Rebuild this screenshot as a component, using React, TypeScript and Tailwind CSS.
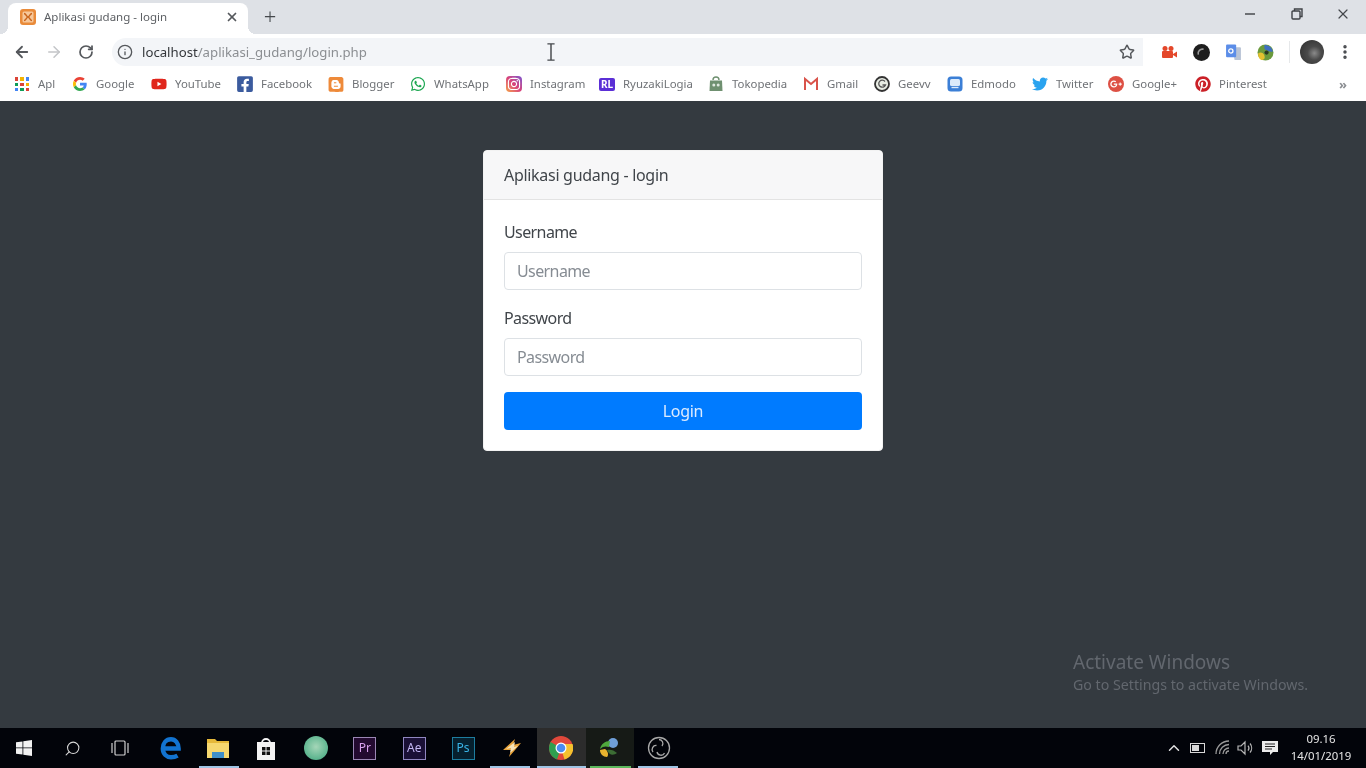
import React from 'react'
import { ArrowLeft, ArrowRight, ChevronUp, Info, MoreVertical, RotateCw, Search, Star, X } from 'lucide-react'
import { FaBlogger, FaFacebookSquare, FaGooglePlusG, FaInstagram, FaPinterest, FaTwitter, FaWhatsapp, FaYoutube } from 'react-icons/fa'

const GoogleIcon = () => (
  <svg viewBox="0 0 48 48" className="h-[14px] w-[14px]">
    <path fill="#EA4335" d="M24 9.5c3.5 0 6.7 1.2 9.2 3.6l6.9-6.9C35.9 2.4 30.4 0 24 0 14.6 0 6.5 5.4 2.6 13.2l8 6.2C12.5 13.6 17.800 9.500 24 9.500z" />
    <path fill="#4285F4" d="M47 24.500c0-1.600-.1-3.100-.4-4.500H24v9h12.900c-.6 3-2.200 5.500-4.700 7.200l7.700 6C44.400 38 47 31.800 47 24.500z" />
    <path fill="#FBBC05" d="M10.600 28.600c-.5-1.400-.8-3-.8-4.600s.3-3.200.8-4.600l-8-6.200C.9 16.500 0 20.100 0 24s.9 7.500 2.600 10.800l8-6.200z" />
    <path fill="#34A853" d="M24 48c6.500 0 11.900-2.100 15.900-5.800l-7.700-6c-2.200 1.500-5 2.300-8.200 2.300-6.200 0-11.500-4.100-13.400-9.900l-8 6.200C6.500 42.600 14.600 48 24 48z" />
  </svg>
)

const AppsIcon = () => (
  <div className="grid h-[14px] w-[14px] grid-cols-3 gap-[2px]">
    {['#db4437', '#f4b400', '#4285f4', '#0f9d58', '#db4437', '#f4b400', '#4285f4', '#0f9d58', '#db4437'].map((c, i) => (
      <span key={i} style={{ backgroundColor: c }} />
    ))}
  </div>
)

const RlIcon = () => (
  <div className="flex h-[13px] w-4 items-center justify-center rounded-[2px] bg-[#5b2fd6] text-[10px] leading-none font-bold text-white">RL</div>
)

const TokoIcon = () => (
  <svg viewBox="0 0 16 16" className="h-4 w-4">
    <path d="M5 4a3 3 0 0 1 6 0" fill="none" stroke="#6f9070" strokeWidth="1.400" />
    <path d="M2 4.500h12l.5 10.500h-13z" fill="#6f9070" />
    <circle cx="5.800" cy="9" r="1.500" fill="#dfe8df" />
    <circle cx="10.200" cy="9" r="1.500" fill="#dfe8df" />
  </svg>
)

const GmailIcon = () => (
  <svg viewBox="0 0 16 16" className="h-4 w-4">
    <path d="M2 14V3l6 5 6-5v11" fill="none" stroke="#d9534a" strokeWidth="2" />
  </svg>
)

const GeevvIcon = () => (
  <svg viewBox="0 0 16 16" className="h-4 w-4">
    <circle cx="8" cy="8" r="7" fill="#e8ece4" stroke="#333" strokeWidth="1.800" />
    <path d="M11 5.500A3.500 3.500 0 1 0 11.500 9H8.500" fill="none" stroke="#555" strokeWidth="1.300" />
  </svg>
)

const EdmodoIcon = () => (
  <svg viewBox="0 0 16 16" className="h-4 w-4">
    <rect x="0.500" y="0.500" width="15" height="15" rx="3.500" fill="#3b7fd6" />
    <rect x="3" y="3" width="10" height="7" rx="1.500" fill="#dcebfb" />
    <path d="M4.500 11.500h7" stroke="#dcebfb" strokeWidth="1.400" />
  </svg>
)

const bookmarks = [
  { label: 'Apl', icon: <AppsIcon />, text: 'w-[18px]', gap: 'ml-0' },
  { label: 'Google', icon: <GoogleIcon />, text: 'w-[38px]', gap: 'ml-[16px]' },
  { label: 'YouTube', icon: <FaYoutube className="h-4 w-4 text-[#e0261c]" />, text: 'w-[46px]', gap: 'ml-[17px]' },
  { label: 'Facebook', icon: <FaFacebookSquare className="h-[18px] w-[18px] text-[#3b5b9e]" />, text: 'w-[51px]', gap: 'ml-[16px]' },
  { label: 'Blogger', icon: <FaBlogger className="h-[17px] w-[17px] text-[#ee8a3a]" />, text: 'w-[42px]', gap: 'ml-[16px]' },
  { label: 'WhatsApp', icon: <FaWhatsapp className="h-4 w-4 text-[#1ba650]" />, text: 'w-[55px]', gap: 'ml-[16px]' },
  {
    label: 'Instagram',
    icon: (
      <div className="flex h-4 w-4 items-center justify-center rounded-[4px] bg-gradient-to-tr from-[#f5a13c] via-[#d8407a] to-[#7a4fd0]">
        <FaInstagram className="h-[14px] w-[14px] text-white" />
      </div>
    ),
    text: 'w-[52px]',
    gap: 'ml-[17px]',
  },
  { label: 'RyuzakiLogia', icon: <RlIcon />, text: 'w-[69px]', gap: 'ml-[17px]' },
  { label: 'Tokopedia', icon: <TokoIcon />, text: 'w-[55px]', gap: 'ml-[16px]' },
  { label: 'Gmail', icon: <GmailIcon />, text: 'w-[30px]', gap: 'ml-[16px]' },
  { label: 'Geevv', icon: <GeevvIcon />, text: 'w-[32px]', gap: 'ml-[17px]' },
  { label: 'Edmodo', icon: <EdmodoIcon />, text: 'w-[44px]', gap: 'ml-[17px]' },
  { label: 'Twitter', icon: <FaTwitter className="h-4 w-4 text-[#2aa3ef]" />, text: 'w-[36px]', gap: 'ml-[17px]' },
  {
    label: 'Google+',
    icon: (
      <div className="flex h-4 w-4 items-center justify-center rounded-full bg-[#dd5044]">
        <FaGooglePlusG className="h-3 w-3 text-white" />
      </div>
    ),
    text: 'w-[46px]',
    gap: 'ml-[16px]',
  },
  { label: 'Pinterest', icon: <FaPinterest className="h-4 w-4 text-[#cb2027]" />, text: 'w-[46px]', gap: 'ml-[17px]' },
]

const XamppIcon = () => (
  <svg viewBox="0 0 16 16" className="h-4 w-4 shrink-0">
    <rect width="16" height="16" rx="3" fill="#e98b3a" />
    <rect x="2.500" y="2.500" width="11" height="11" rx="1.500" fill="#f6c79a" />
    <path d="M4 4.500c2 0 2.500 3.500 4 3.500s2-3.500 4-3.500M4 11.500c2 0 2.500-3.500 4-3.500s2 3.500 4 3.500" fill="none" stroke="#c9651c" strokeWidth="1.500" />
  </svg>
)

const BrowserChrome = () => (
  <div className="shrink-0 bg-white">
    {/* tab strip */}
    <div className="flex h-[34px] items-end bg-[#dee1e6] pl-2">
      <div className="relative flex h-[31px] w-[240px] items-center rounded-t-lg bg-white pr-[9px] pb-[3px] pl-3">
        <span className="absolute bottom-0 -left-2 h-2 w-2 bg-[radial-gradient(circle_at_0_0,#dee1e6_8px,#ffffff_8px)]" />
        <span className="absolute -right-2 bottom-0 h-2 w-2 bg-[radial-gradient(circle_at_100%_0,#dee1e6_8px,#ffffff_8px)]" />
        <XamppIcon />
        <span className="ml-2 flex-1 truncate text-[11.500px] text-[#5c5f63]">Aplikasi gudang - login</span>
        <X className="h-[14px] w-[14px] text-[#55585c]" strokeWidth={3} />
      </div>
      <div className="mb-[11px] ml-[15px] flex h-[14px] w-[14px] items-center justify-center text-[22px] leading-none font-light text-[#45484c]">+</div>
      <div className="flex-1" />
      <div className="mb-[12px] flex items-center text-[#4c4f53]">
        <span className="h-[2px] w-[10px] bg-[#6d7074]" />
        <svg viewBox="0 0 12 12" className="ml-[36px] h-3 w-3" fill="none" stroke="#3f4246" strokeWidth="1.400">
          <rect x="1" y="3" width="8" height="8" rx="1" />
          <path d="M3.500 3V1h7.500v7.500H9" />
        </svg>
        <X className="mr-[15px] ml-[32px] h-[16px] w-[16px] text-[#44474b]" strokeWidth={1.800} />
      </div>
    </div>

    {/* toolbar */}
    <div className="flex h-[34px] items-center pt-[2px] pl-[5px]">
      <div className="flex h-[32px] w-[33px] items-center justify-center">
        <ArrowLeft className="h-[18px] w-[18px] text-[#55585c]" strokeWidth={2.400} />
      </div>
      <div className="flex h-[32px] w-[32px] items-center justify-center">
        <ArrowRight className="h-[18px] w-[18px] text-[#c3c5c8]" strokeWidth={2} />
      </div>
      <div className="flex h-[32px] w-[32px] items-center justify-center">
        <RotateCw className="h-[16px] w-[16px] text-[#55585c]" strokeWidth={2.600} />
      </div>
      <div className="ml-[10px] flex h-[28px] flex-1 items-center rounded-l-full bg-[#f3f5f8] pr-[8px] pl-[5px]">
        <Info className="h-[16px] w-[16px] text-[#55585c]" strokeWidth={2} />
        <div className="ml-[9px] flex-1 pt-[1px] text-[13.200px] whitespace-nowrap text-[#8b8e92]">
          <span className="text-[#33363a]">localhost</span>/aplikasi_gudang/login.php
        </div>
        <Star className="h-[16px] w-[16px] text-[#55585c]" strokeWidth={2.200} />
      </div>
      <div className="flex w-[223px] items-center pl-[10px]">
        <div className="flex h-8 w-8 items-center justify-center">
          <svg viewBox="0 0 16 16" className="h-4 w-4">
            <circle cx="4" cy="4.500" r="2.500" fill="#e4472a" />
            <circle cx="10" cy="4.500" r="2.500" fill="#e4472a" />
            <rect x="1" y="7" width="11" height="7" rx="1" fill="#e4472a" />
            <path d="M12 10l4-2.500v6L12 11z" fill="#e4472a" />
          </svg>
        </div>
        <div className="flex h-8 w-8 items-center justify-center">
          <svg viewBox="0 0 16 16" className="h-[17px] w-[17px]">
            <circle cx="8" cy="8" r="8" fill="#1e1e1e" />
            <path d="M5 10a4 4 0 0 1 5-5" fill="none" stroke="#9a9a9a" strokeWidth="1.500" />
          </svg>
        </div>
        <div className="flex h-8 w-8 items-center justify-center">
          <svg viewBox="0 0 16 16" className="h-[17px] w-[17px]">
            <path d="M7 3h7a1 1 0 0 1 1 1v11H9z" fill="#b9c4d6" />
            <rect x="1" y="0.500" width="9.500" height="12" rx="1" fill="#5b8de8" />
            <circle cx="5.500" cy="6.500" r="2" fill="none" stroke="#fff" strokeWidth="1.200" />
          </svg>
        </div>
        <div className="flex h-8 w-8 items-center justify-center">
          <svg viewBox="0 0 16 16" className="h-[17px] w-[17px]">
            <circle cx="8" cy="8" r="7.500" fill="#6a9a3c" />
            <path d="M7 1c4 0 7 2 8 6-3 1-5-1-8-2z" fill="#3f6fc0" />
            <path d="M1 9c2-2 5-1 6 2s-1 4-3 4c-2-1-3-3-3-6z" fill="#e3c12f" />
            <circle cx="9" cy="8" r="2" fill="#2a3a20" />
          </svg>
        </div>
        <span className="ml-[8px] h-[22px] w-px bg-[#e6e8ea]" />
        <div className="ml-[10px] h-6 w-6 rounded-full bg-[radial-gradient(circle_at_60%_55%,#8a8a8a_0,#4a4a4a_35%,#2c2c2c_100%)]" />
        <MoreVertical className="ml-[12px] h-[18px] w-[18px] text-[#45484c]" strokeWidth={2.600} />
      </div>
    </div>

    {/* bookmarks */}
    <div className="flex h-[33px] items-center pl-[14px]">
      {bookmarks.map((b) => (
        <div key={b.label} className={`flex items-center ${b.gap}`}>
          <div className="flex h-4 w-4 items-center justify-center">{b.icon}</div>
          <span className={`ml-[8px] pb-[2px] text-[11.400px] whitespace-nowrap text-[#6f7276] ${b.text}`}>{b.label}</span>
        </div>
      ))}
      <div className="flex-1" />
      <span className="mr-[19px] text-[13px] leading-none font-bold text-[#8b8e92]">»</span>
    </div>
  </div>
)

const LoginCard = () => (
  <div className="mx-auto mt-[49px] w-[400px] overflow-hidden rounded-[4px] border border-[#f2f2f2] bg-white text-[16px] text-[#40454a]">
    <div className="h-[49px] border-b border-[#e3e3e3] bg-[#f7f7f8] px-5 py-3 leading-6 tracking-[-0.3px]">Aplikasi gudang - login</div>
    <div className="p-5">
      <label className="mb-2 block leading-6 tracking-[-0.6px]">Username</label>
      <input
        placeholder="Username"
        className="mb-4 block h-[38px] w-full rounded-[4px] border border-[#dde1e5] bg-white px-3 text-[16px] tracking-[-0.6px] outline-none placeholder:text-[#868c93]"
      />
      <label className="mb-2 block leading-6 tracking-[-0.6px]">Password</label>
      <input
        placeholder="Password"
        className="mb-4 block h-[38px] w-full rounded-[4px] border border-[#dde1e5] bg-white px-3 text-[16px] tracking-[-0.6px] outline-none placeholder:text-[#868c93]"
      />
      <button className="block h-[38px] w-full rounded-[4px] bg-[#007bff] text-[16px] tracking-[-0.3px] text-[#dcebff]">Login</button>
    </div>
  </div>
)

const TaskCell = ({
  children,
  active,
  line,
  dim,
  nudge = '',
}: {
  children: React.ReactNode
  active?: boolean
  line?: string
  dim?: boolean
  nudge?: string
}) => (
  <div className={`relative flex h-10 w-[48.800px] items-center justify-center ${nudge} ${active ? 'bg-[#2c2c2c]' : ''} ${dim ? 'bg-[#161a16]' : ''}`}>
    {children}
    {line && <span className={`absolute bottom-0 h-[2px] ${line}`} />}
  </div>
)

const AdobeIcon = ({ name, cls }: { name: string; cls: string }) => (
  <div className={`flex h-[23px] w-[23px] items-center justify-center border-[1.500px] text-[12px] leading-none ${cls}`}>{name}</div>
)

const Taskbar = () => (
  <div className="flex h-10 shrink-0 items-center bg-[#02040a]">
    <TaskCell>
      <svg viewBox="0 0 16 16" className="h-4 w-4" fill="#f2f2f2">
        <path d="M0 2.300L6.500 1.400V7.500H0zM7.300 1.300L16 0V7.500H7.300zM0 8.300H6.500V14.600L0 13.700zM7.300 8.300H16V16L7.300 14.700z" />
      </svg>
    </TaskCell>
    <TaskCell nudge="pr-[2px]">
      <Search className="h-[17px] w-[17px] -scale-x-100 text-[#d8d8d8]" strokeWidth={1.500} />
    </TaskCell>
    <TaskCell nudge="pr-[4px]">
      <svg viewBox="0 0 20 16" className="h-4 w-5" fill="none" stroke="#d0d0d0" strokeWidth="1.200">
        <rect x="5" y="1" width="10" height="14" rx="1" />
        <path d="M2 3v10M18 3v10" />
      </svg>
    </TaskCell>
    <TaskCell>
      <svg viewBox="0 0 20 22" className="h-[24px] w-[22px]" fill="none" stroke="#1273d0" strokeWidth="4">
        <path d="M3 11.500h14c0-5-3-8.500-7-8.500-4.500 0-7.500 3.500-7.500 8.500s3.500 8 7.500 8c2.500 0 4.500-.6 6-1.500" />
      </svg>
    </TaskCell>
    <TaskCell nudge="pr-[3px]" line="left-1 w-[40px] bg-[#9fc4e4]">
      <svg viewBox="0 0 22 20" className="h-5 w-[22px]">
        <path d="M0 1h8l2 2h12v4H0z" fill="#e6b93a" />
        <rect y="5" width="22" height="15" fill="#f6d870" />
        <path d="M5 14h12v6H5z" fill="#3f8fc9" />
      </svg>
    </TaskCell>
    <TaskCell nudge="pr-[4px]">
      <svg viewBox="0 0 20 24" className="h-6 w-5">
        <path d="M6 7a4 4 0 0 1 8 0" fill="none" stroke="#f4f4f4" strokeWidth="1.800" />
        <path d="M1 6h18v18H1z" fill="#f4f4f4" />
        <path d="M6 11h3.500v3.500H6zM10.500 11H14v3.500h-3.500zM6 15.500h3.500V19H6zM10.500 15.500H14V19h-3.500z" fill="#111" />
      </svg>
    </TaskCell>
    <TaskCell nudge="pr-[2px]">
      <div className="h-6 w-6 rounded-full bg-[radial-gradient(circle_at_50%_45%,#a5d6b8,#5bb48e_70%,#3f9c78)]" />
    </TaskCell>
    <TaskCell nudge="pr-[2px]">
      <AdobeIcon name="Pr" cls="border-[#9a86b4] bg-[#230a30] text-[#d9a0ee]" />
    </TaskCell>
    <TaskCell nudge="pr-[1px]">
      <AdobeIcon name="Ae" cls="border-[#8f86c0] bg-[#1a1036] text-[#c3b6f4]" />
    </TaskCell>
    <TaskCell nudge="pr-[1px]">
      <AdobeIcon name="Ps" cls="border-[#1d7d9f] bg-[#06202e] text-[#39b5e8]" />
    </TaskCell>
    <TaskCell line="left-[2px] w-[40px] bg-[#9fc4e4]">
      <svg viewBox="0 0 22 22" className="h-[22px] w-[22px]">
        <path d="M2 13L14 2l-2 6 8-2L8 20l2-7z" fill="#e8a33a" />
        <path d="M5 12l9-7-1 5 4-1-8 7 1-5z" fill="#f6e3b8" />
      </svg>
    </TaskCell>
    <TaskCell active line="left-0 w-full bg-[#9fc4e4]">
      <svg viewBox="0 0 24 24" className="h-6 w-6">
        <circle cx="12" cy="12" r="12" fill="#e0483b" />
        <path d="M12 12L1.600 6A12 12 0 0 0 8 23.300z" fill="#2f9e4f" />
        <path d="M12 12l3.500 11.500A12 12 0 0 0 23.500 8H12z" fill="#f5c12e" />
        <circle cx="12" cy="12" r="5.500" fill="#fff" />
        <circle cx="12" cy="12" r="4.300" fill="#4a8cf0" />
      </svg>
    </TaskCell>
    <TaskCell dim line="left-1 w-[41px] bg-[#5cb85c]">
      <svg viewBox="0 0 24 24" className="h-6 w-6">
        <circle cx="15" cy="7" r="5" fill="#6f9fd8" />
        <path d="M12 5c-5 0-9 3-10 8 3-3 6-3 9-2z" fill="#4fa83d" />
        <path d="M2 14c0 4 3 7 7 7 2-2 1-6-2-8z" fill="#e8b32e" />
        <path d="M9 14c3-1 7 0 10 3-4 3-8 2-10-3z" fill="#3c6d34" />
      </svg>
    </TaskCell>
    <TaskCell line="left-1 w-[40px] bg-[#9fc4e4]">
      <svg viewBox="0 0 24 24" className="h-6 w-6" fill="none" stroke="#a8a8a8" strokeWidth="1.300">
        <circle cx="12" cy="12" r="10.500" />
        <path d="M12 3.500a4 4 0 0 1 3 6.500M6 16a4 4 0 0 1 3.500-6.500M17.500 17a4 4 0 0 1-7.500-1" />
      </svg>
    </TaskCell>
    <div className="flex-1" />
    <ChevronUp className="h-[18px] w-[18px] text-[#e0e0e0]" strokeWidth={2} />
    <svg viewBox="0 0 16 10" className="ml-[7px] h-[10px] w-4" fill="none" stroke="#d8d8d8">
      <rect x="0.500" y="0.500" width="14" height="9" />
      <rect x="2" y="2" width="7" height="6" fill="#d8d8d8" stroke="none" />
    </svg>
    <svg viewBox="0 0 16 16" className="ml-[9px] h-4 w-4" fill="none" stroke="#9a9a9a" strokeWidth="1.300">
      <path d="M1 14A13 13 0 0 1 14 1M4.500 14A9.500 9.500 0 0 1 14 4.500M8 14A6 6 0 0 1 14 8M11 14a3 3 0 0 1 3-3" />
    </svg>
    <svg viewBox="0 0 16 16" className="ml-[6px] h-4 w-4" fill="none" stroke="#b5b5b5" strokeWidth="1.200">
      <path d="M1 6v4h3l4 4V2L4 6zM11 5.500a4 4 0 0 1 0 5M13 3.500a7 7 0 0 1 0 9" />
    </svg>
    <svg viewBox="0 0 16 16" className="ml-[9px] h-4 w-4">
      <path d="M0 1h16v11h-5l-3 3v-3H0z" fill="#ececec" />
      <path d="M3 4h10M3 6.500h10M3 9h7" stroke="#222" strokeWidth="1" />
    </svg>
    <div className="ml-[12px] w-[62px] pb-[2px] text-center text-[11.400px] leading-[17px] text-[#e6e6e6]">
      <div>09.16</div>
      <div>14/01/2019</div>
    </div>
    <div className="w-[14px]" />
  </div>
)

export default function App() {
  return (
    <div className="relative flex h-screen flex-col overflow-hidden bg-[#343a40] font-['Noto_Sans','Open_Sans',sans-serif] blur-[0.4px]">
      <BrowserChrome />
      <div className="relative flex-1 overflow-hidden">
        <LoginCard />
        <div className="absolute top-[549px] left-[1073px] text-[#62676e]">
          <div className="text-[19px] leading-6">Activate Windows</div>
          <div className="mt-[1px] text-[14.200px] leading-5">Go to Settings to activate Windows.</div>
        </div>
      </div>
      <Taskbar />
      {/* mouse cursor */}
      <svg viewBox="0 0 10 20" className="absolute top-[43px] left-[546px] h-[18px] w-[10px]" fill="none" stroke="#45484c" strokeWidth="1.600">
        <path d="M1 1h8M1 19h8M5 1v18" />
      </svg>
    </div>
  )
}
